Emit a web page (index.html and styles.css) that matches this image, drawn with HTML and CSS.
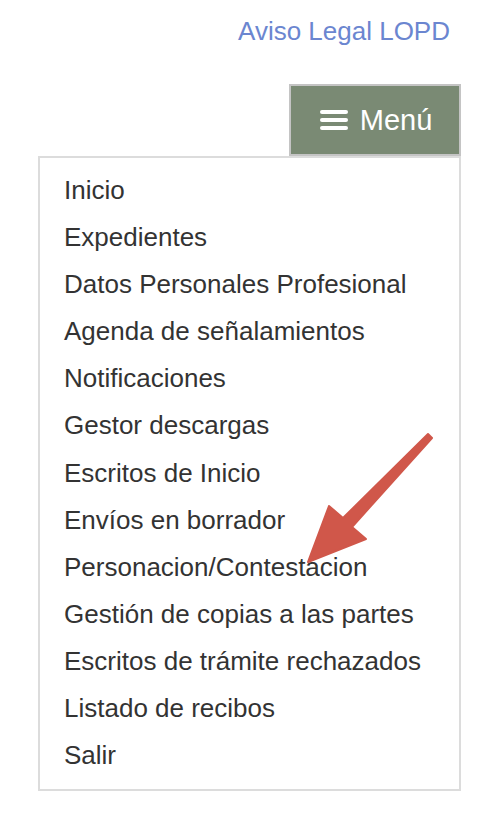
FILE: index.html
```html
<!DOCTYPE html>
<html lang="es">
<head>
<meta charset="utf-8">
<title>Menú</title>
<link rel="stylesheet" href="styles.css">
</head>
<body>
<div class="page">
  <div class="top">
    <a class="legal" href="#">Aviso Legal LOPD</a>
  </div>
  <div class="btn-row">
    <button class="menu-btn" type="button">
      <svg class="burger" width="28" height="20" viewBox="0 0 28 20" aria-hidden="true">
        <rect x="0" y="0" width="28" height="4" rx="2" fill="#fff"/>
        <rect x="0" y="8" width="28" height="4" rx="2" fill="#fff"/>
        <rect x="0" y="16" width="28" height="4" rx="2" fill="#fff"/>
      </svg>
      <span>Menú</span>
    </button>
  </div>
  <ul class="menu">
    <li><a href="#">Inicio</a></li>
    <li><a href="#">Expedientes</a></li>
    <li><a href="#">Datos Personales Profesional</a></li>
    <li><a href="#">Agenda de señalamientos</a></li>
    <li><a href="#">Notificaciones</a></li>
    <li><a href="#">Gestor descargas</a></li>
    <li><a href="#">Escritos de Inicio</a></li>
    <li><a href="#">Envíos en borrador</a></li>
    <li><a href="#">Personacion/Contestacion</a></li>
    <li><a href="#">Gestión de copias a las partes</a></li>
    <li><a href="#">Escritos de trámite rechazados</a></li>
    <li><a href="#">Listado de recibos</a></li>
    <li><a href="#">Salir</a></li>
  </ul>
</div>
<svg class="arrow" width="502" height="836" viewBox="0 0 502 836" aria-hidden="true">
  <polygon points="428,434 343,518 329,506 308,562 366,539 352,527 432,438"
           fill="#d0574a" stroke="#d0574a" stroke-width="2" stroke-linejoin="round"/>
</svg>
</body>
</html>
```

FILE: styles.css
```css
html, body {
  margin: 0;
  padding: 0;
  background: #fff;
}

body {
  font-family: "Liberation Sans", Arial, Helvetica, sans-serif;
  color: #333;
  position: relative;
  width: 502px;
  height: 836px;
  overflow: hidden;
}

.page {
  width: 423px;
  margin-left: 38px;
  padding-top: 16px;
}

.top {
  display: flex;
  justify-content: flex-end;
  padding-right: 11px;
}

.legal {
  font-size: 26px;
  line-height: 30px;
  color: #6b86d0;
  text-decoration: none;
}

.btn-row {
  display: flex;
  justify-content: flex-end;
  margin-top: 38px;
}

.menu-btn {
  box-sizing: border-box;
  width: 172px;
  height: 72px;
  border: 2px solid #c4c4c4;
  background: #7a8a74;
  color: #fff;
  font-family: "Liberation Sans", Arial, Helvetica, sans-serif;
  font-size: 29px;
  display: flex;
  align-items: center;
  justify-content: center;
  gap: 12px;
  padding: 0 0 0 2px;
  margin: 0;
  cursor: pointer;
}

.burger {
  display: block;
  flex: none;
}

.menu {
  list-style: none;
  margin: 0;
  box-sizing: border-box;
  border: 2px solid #dcdcdc;
  padding: 9px 0 10px 24px;
}

.menu li {
  font-size: 26px;
  line-height: 47.1px;
}

.menu a {
  color: #333;
  text-decoration: none;
}

.arrow {
  position: absolute;
  left: 0;
  top: 0;
  pointer-events: none;
}
```
